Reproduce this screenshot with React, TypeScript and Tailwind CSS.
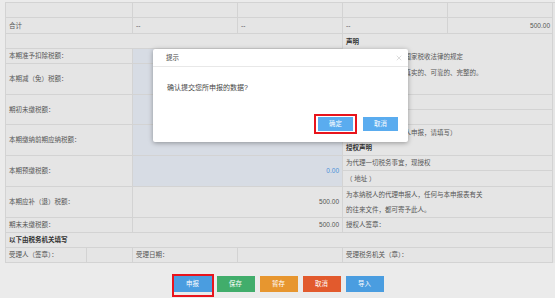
import { X } from 'lucide-react'

const cell = 'flex items-center border-r border-b border-[#d3d3d3] px-[3px] overflow-hidden whitespace-nowrap'
const blue = 'bg-[#d7dce4]'

function Field({ className = '', children }: { className?: string; children?: React.ReactNode }) {
  return <div className={`${cell} ${className}`}>{children}</div>
}

const buttons = [
  { label: '保存', color: 'bg-[#41ad6b]' },
  { label: '暂存', color: 'bg-[#e7962f]' },
  { label: '取消', color: 'bg-[#e25a2d]' },
  { label: '导入', color: 'bg-[#4a9de0]' },
]

export default function App() {
  return (
    <div className="min-h-[301px] w-[558px] bg-white font-['Liberation_Sans','Noto_Sans_CJK_SC',sans-serif] text-[6.5px] text-[#555]">
      <div className="relative h-[298px] w-[555px] bg-[#ebebeb] pl-[5px] pt-[2px]">
        {/* form table */}
        <div className="grid grid-cols-[81px_46px_105px_105px_105px_105px] grid-rows-[15px_16px_15px_15px_31px_15px_15px_31px_15px_16px_31px_15px_15px_15px] border-l border-t border-[#d3d3d3] bg-[#e5e5e5]">
          {/* row 1 */}
          <Field className="col-span-2" />
          <Field />
          <Field />
          <Field />
          <Field />

          {/* row 2 */}
          <Field className="col-span-2">合计</Field>
          <Field>--</Field>
          <Field>--</Field>
          <Field>--</Field>
          <Field className="justify-end pr-[2px]">500.00</Field>

          {/* row 3 + declaration */}
          <Field className="col-span-4" />
          <div className="col-span-2 row-span-3 flex flex-col border-b border-r border-[#d3d3d3] px-[3px] leading-[15.3px]">
            <span className="font-bold text-[#333]">声明</span>
            <span>此纳税申报表是根据国家税收法律的规定</span>
            <span>填报的，我确定它是真实的、可靠的、完整的。</span>
          </div>

          <Field className="col-span-2">本期准予扣除税额：</Field>
          <Field className={`col-span-2 ${blue}`} />

          <Field className="col-span-2">本期减（免）税额：</Field>
          <Field className={`col-span-2 ${blue}`} />

          <Field className="col-span-2 row-span-2">期初未缴税额：</Field>
          <Field className={`col-span-2 row-span-2 ${blue}`} />
          <Field className="col-span-2" />
          <Field className="col-span-2" />

          <Field className="col-span-2">本期缴纳前期应纳税额：</Field>
          <Field className={`col-span-2 justify-end text-[#4a90d9] ${blue}`}>0.00</Field>
          <div className="col-span-2 flex flex-col border-b border-r border-[#d3d3d3] px-[3px] leading-[15.3px]">
            <span>（如果你已委托代理人申报，请填写）</span>
            <span className="font-bold text-[#333]">授权声明</span>
          </div>

          <Field className="col-span-2 row-span-2">本期预缴税额：</Field>
          <Field className={`col-span-2 row-span-2 justify-end text-[#4a90d9] ${blue}`}>0.00</Field>
          <Field className="col-span-2">为代理一切税务事宜，现授权</Field>
          <Field className="col-span-2">（ 地址 ）</Field>

          <Field className="col-span-2">本期应补（退）税额：</Field>
          <Field className="col-span-2 justify-end">500.00</Field>
          <div className="col-span-2 flex flex-col border-b border-r border-[#d3d3d3] px-[3px] leading-[15.3px]">
            <span>为本纳税人的代理申报人，任何与本申报表有关</span>
            <span>的往来文件，都可寄予此人。</span>
          </div>

          <Field className="col-span-2">期末未缴税额：</Field>
          <Field className="col-span-2 justify-end">500.00</Field>
          <Field className="col-span-2">授权人签章：</Field>

          <Field className="col-span-6 font-bold text-[#333]">以下由税务机关填写</Field>

          <Field>受理人（签章）：</Field>
          <Field />
          <Field>受理日期：</Field>
          <Field />
          <Field className="col-span-2">受理税务机关（章）：</Field>
        </div>

        {/* action buttons */}
        <div className="mt-[13px] flex justify-center gap-[5px] pr-[3px] text-[6.4px] text-white">
          <div className="-mx-[2px] -my-[2px] border-2 border-[#e8141c] pb-[3px]">
            <button className="h-[16px] w-[38px] bg-[#4a9de0]">申报</button>
          </div>
          {buttons.map((b) => (
            <button key={b.label} className={`h-[16px] w-[38px] ${b.color}`}>
              {b.label}
            </button>
          ))}
        </div>

        {/* confirm dialog */}
        <div className="absolute left-[153px] top-[49px] flex h-[93px] w-[255px] flex-col rounded-[2px] bg-white shadow-[0_1px_5px_rgba(0,0,0,0.35)]">
          <div className="flex h-[18px] items-center justify-between border-b border-[#e8e8e8] pl-[13px] pr-[5px] text-[#444]">
            <span>提示</span>
            <X size={8} strokeWidth={1.2} className="text-[#aaa]" />
          </div>
          <div className="flex-1 pl-[14px] pt-[16px] text-[7px] text-[#444]">确认提交您所申报的数据?</div>
          <div className="flex justify-end gap-[6px] pb-[10px] pr-[10px] text-[6.4px] text-white">
            <div className="-my-[2px] border-2 border-[#e8141c] px-[2px] py-[1px]">
              <button className="block h-[14px] w-[35px] bg-[#5aacef]">确定</button>
            </div>
            <button className="mt-[1px] h-[14px] w-[35px] bg-[#5aacef]">取消</button>
          </div>
        </div>
      </div>
    </div>
  )
}
